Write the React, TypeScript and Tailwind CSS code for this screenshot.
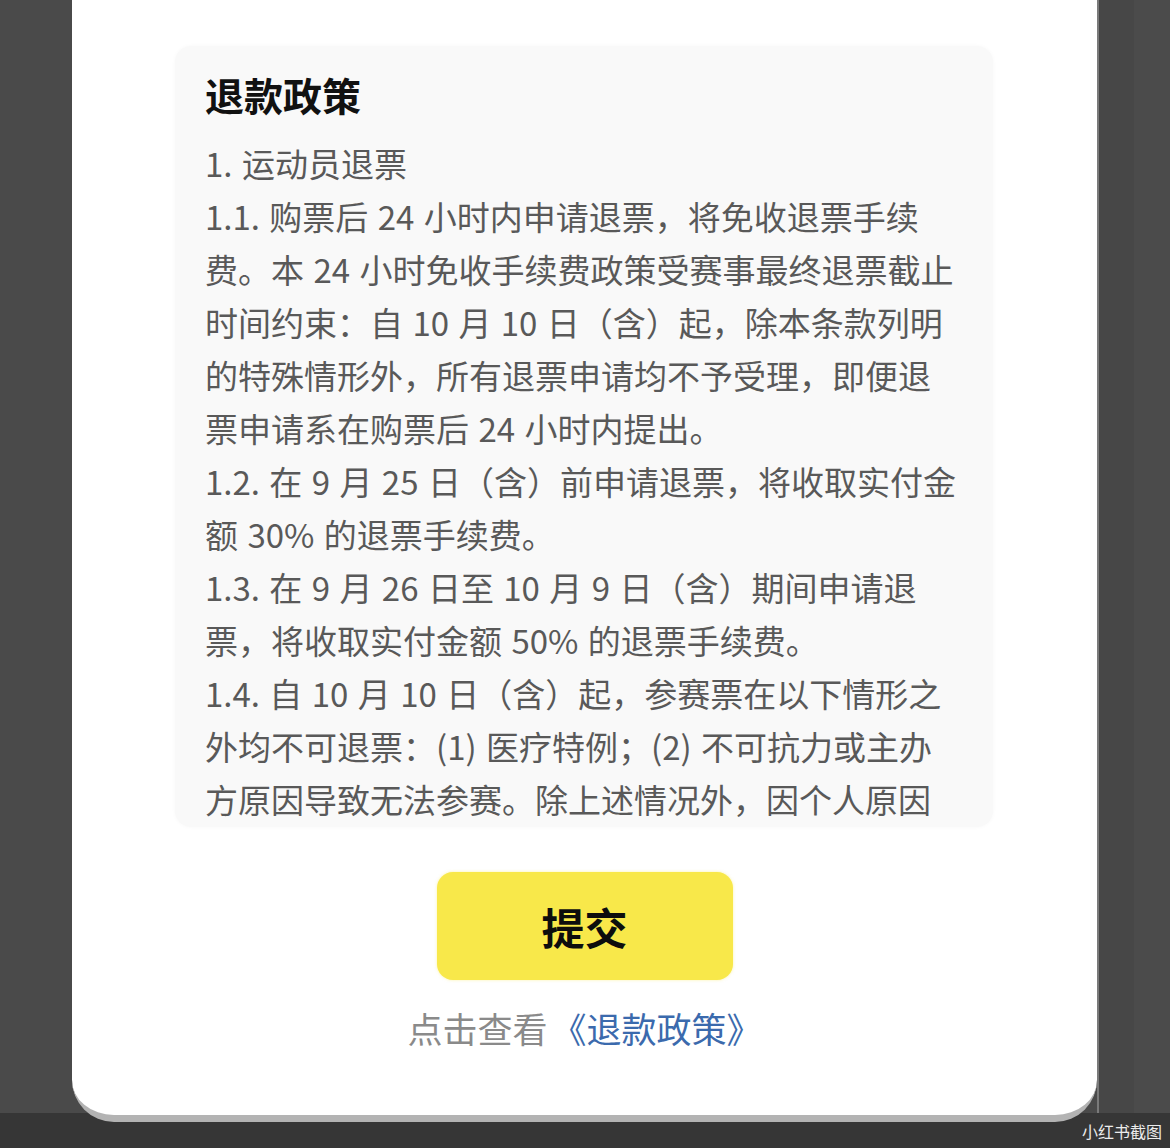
import React from "react";

const lines: string[] = [
  "1. 运动员退票",
  "1.1. 购票后 24 小时内申请退票，将免收退票手续",
  "费。本 24 小时免收手续费政策受赛事最终退票截止",
  "时间约束：自 10 月 10 日（含）起，除本条款列明",
  "的特殊情形外，所有退票申请均不予受理，即便退",
  "票申请系在购票后 24 小时内提出。",
  "1.2. 在 9 月 25 日（含）前申请退票，将收取实付金",
  "额 30% 的退票手续费。",
  "1.3. 在 9 月 26 日至 10 月 9 日（含）期间申请退",
  "票，将收取实付金额 50% 的退票手续费。",
  "1.4. 自 10 月 10 日（含）起，参赛票在以下情形之",
  "外均不可退票：(1) 医疗特例；(2) 不可抗力或主办",
  "方原因导致无法参赛。除上述情况外，因个人原因",
];

export default function App() {
  return (
    <div
      className="relative h-[1148px] w-[1170px] overflow-hidden bg-[#4a4a4a] flex flex-col"
      style={{ fontFamily: '"Noto Sans CJK SC", "Noto Sans", sans-serif' }}
    >
      <div className="flex">
        <div className="w-[72px] shrink-0" />
        <div className="relative z-10 w-[1025px] h-[1122px] shrink-0 bg-white rounded-b-[42px] border-b-[7px] border-[#b3b3b3] flex flex-col items-center">
          <div className="mt-[46px] w-[818px] h-[781px] bg-[#f9f9f9] rounded-[16px] overflow-hidden pl-[30px] pt-[23px] shadow-[0_0_4px_rgba(0,0,0,0.03)] self-center -ml-[1px]">
            <div className="h-[50px] leading-[50px] text-[39px] font-bold text-[#111111]">
              退款政策
            </div>
            <div className="mt-[18px] text-[33px] leading-[53px] text-[#595959] [word-spacing:2px]">
              {lines.map((l, i) => (
                <div key={i} className="whitespace-nowrap h-[53px]">
                  {l}
                </div>
              ))}
            </div>
          </div>
          <div className="mt-[45px] w-[296px] h-[108px] rounded-[16px] bg-[#f8e84a] flex items-center justify-center shadow-[0_0_3px_rgba(248,232,74,0.5)]">
            <span className="text-[43px] font-bold text-[#0d0d0d] leading-none">提交</span>
          </div>
          <div className="mt-[24px] h-[48px] leading-[48px] text-[35px] whitespace-nowrap flex">
            <span className="text-[#8a8a8a]">点击查看</span>
            <span className="ml-[4px] text-[#3b6aad]">《退款政策》</span>
          </div>
        </div>
        <div className="w-[2px] h-[1113px] bg-[#7a7a7a] shrink-0" />
        <div className="w-[35px] h-[1113px] bg-[#474747] shrink-0" />
        <div className="flex-1 h-[1113px] bg-[#4b4b4b]" />
      </div>
      <div className="-mt-[9px] h-[35px] bg-[#363636] flex items-center justify-end pr-[8px]">
        <span className="text-[16px] leading-none text-[#ececec]">小红书截图</span>
      </div>
    </div>
  );
}
